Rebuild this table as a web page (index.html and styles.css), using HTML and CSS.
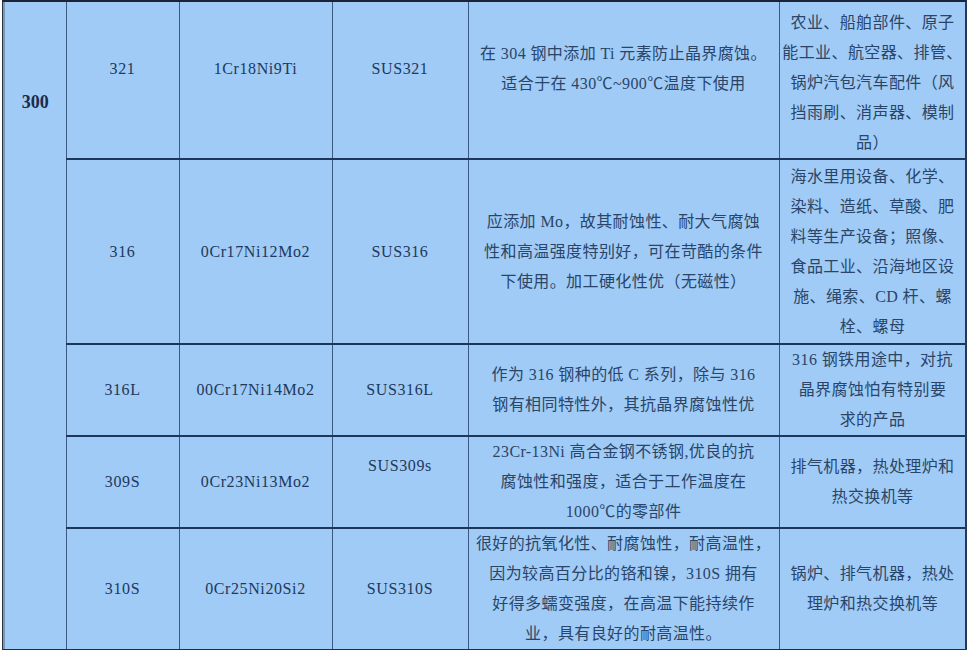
FILE: index.html
```html
<!DOCTYPE html>
<html lang="zh-CN">
<head>
<meta charset="utf-8">
<title>不锈钢 300 系列</title>
<link rel="stylesheet" href="styles.css">
</head>
<body>
<div class="frame">
  <table class="steel">
    <colgroup>
      <col class="c-group">
      <col class="c-grade">
      <col class="c-cn">
      <col class="c-jis">
      <col class="c-desc">
      <col class="c-use">
    </colgroup>
    <tbody>
      <tr class="r1">
        <td class="group" rowspan="5">300</td>
        <td class="code">321</td>
        <td class="code">1Cr18Ni9Ti</td>
        <td class="code">SUS321</td>
        <td class="desc">在 304 钢中添加 Ti 元素防止晶界腐蚀。<br>适合于在 430℃~900℃温度下使用</td>
        <td class="use bottom">农业、船舶部件、原子<br>能工业、航空器、排管、<br>锅炉汽包汽车配件（风<br>挡雨刷、消声器、模制<br>品）</td>
      </tr>
      <tr class="r2">
        <td class="code">316</td>
        <td class="code">0Cr17Ni12Mo2</td>
        <td class="code">SUS316</td>
        <td class="desc">应添加 Mo，故其耐蚀性、耐大气腐蚀<br>性和高温强度特别好，可在苛酷的条件<br>下使用。加工硬化性优（无磁性）</td>
        <td class="use">海水里用设备、化学、<br>染料、造纸、草酸、肥<br>料等生产设备；照像、<br>食品工业、沿海地区设<br>施、绳索、CD 杆、螺<br>栓、螺母</td>
      </tr>
      <tr class="r3">
        <td class="code">316L</td>
        <td class="code">00Cr17Ni14Mo2</td>
        <td class="code">SUS316L</td>
        <td class="desc">作为 316 钢种的低 C 系列，除与 316<br>钢有相同特性外，其抗晶界腐蚀性优</td>
        <td class="use">316 钢铁用途中，对抗<br>晶界腐蚀怕有特别要<br>求的产品</td>
      </tr>
      <tr class="r4">
        <td class="code">309S</td>
        <td class="code">0Cr23Ni13Mo2</td>
        <td class="code raised">SUS309s</td>
        <td class="desc">23Cr-13Ni 高合金钢不锈钢,优良的抗<br>腐蚀性和强度，适合于工作温度在<br>1000℃的零部件</td>
        <td class="use">排气机器，热处理炉和<br>热交换机等</td>
      </tr>
      <tr class="r5">
        <td class="code">310S</td>
        <td class="code">0Cr25Ni20Si2</td>
        <td class="code">SUS310S</td>
        <td class="desc">很好的抗氧化性、耐腐蚀性，耐高温性，<br>因为较高百分比的铬和镍，310S 拥有<br>好得多蠕变强度，在高温下能持续作<br>业，具有良好的耐高温性。</td>
        <td class="use">锅炉、排气机器，热处<br>理炉和热交换机等</td>
      </tr>
    </tbody>
  </table>
</div>
</body>
</html>
```
FILE: styles.css
```css
html, body {
  margin: 0;
  padding: 0;
  background: #ffffff;
}

.frame {
  margin-left: 2px;
  width: 965px;
  height: 650px;
  box-sizing: border-box;
  border-top: 2px solid #1b2436;
  border-left: 1px solid #2b3447;
  border-right: 2px solid #27385a;
  background: #a0cbf6;
  overflow: hidden;
}

.steel {
  width: 962px;
  margin-top: -24px;
  table-layout: fixed;
  border-collapse: collapse;
  color: #223a5e;
  font-family: "Liberation Serif", "Noto Sans CJK SC", serif;
}

.c-group { width: 62px; }
.c-grade { width: 113px; }
.c-cn { width: 153px; }
.c-jis { width: 136px; }
.c-desc { width: 311px; }
.c-use { width: 187px; }

.steel td {
  padding: 0;
  text-align: center;
  vertical-align: middle;
  border-left: 1px solid #3b5b82;
  border-right: 1px solid #3b5b82;
  border-top: 2px solid #1d375b;
  border-bottom: 2px solid #1d375b;
  white-space: nowrap;
}

.r1 { height: 180px; }
.r2 { height: 185px; }
.r3 { height: 92px; }
.r4 { height: 92px; }
.r5 { height: 122px; }

.steel td.group {
  vertical-align: top;
  padding-top: 112px;
  border-left: 2px solid #7d98b6;
  border-bottom: 3px solid #1a2f4f;
  font-size: 18px;
  font-weight: bold;
  color: #1a2d4c;
}

.r5 td {
  border-bottom: 3px solid #1a2f4f;
}

.code {
  font-size: 16px;
  letter-spacing: 0.6px;
  color: #20385c;
}

.steel td.raised {
  vertical-align: top;
  padding-top: 20px;
}

.desc,
.use {
  font-size: 16px;
  line-height: 30px;
  letter-spacing: 0.4px;
  color: #2a4568;
}

.steel td.bottom {
  vertical-align: bottom;
}
```
